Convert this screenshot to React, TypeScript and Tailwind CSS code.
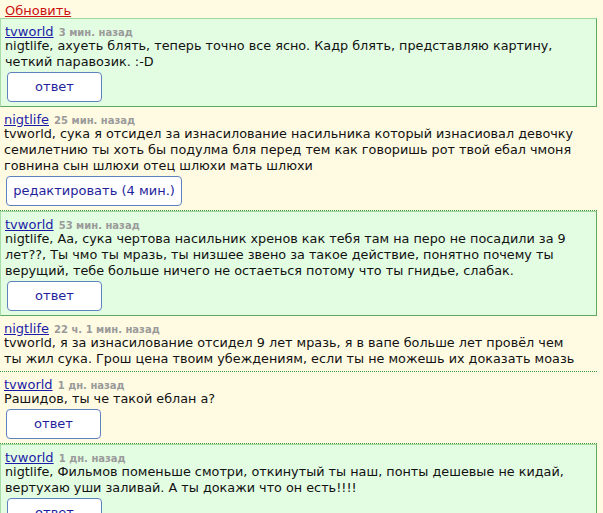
import React from 'react';

interface Post {
  id: number;
  user: string;
  ago: string;
  lines: string[];
  mine: boolean; // green box = reply to me
  action: string;
  wide?: boolean;
}

const posts: Post[] = [
  {
    id: 1,
    user: 'tvworld',
    ago: '3 мин. назад',
    lines: [
      'nigtlife, ахуеть блять, теперь точно все ясно. Кадр блять, представляю картину,',
      'четкий паравозик. :-D',
    ],
    mine: true,
    action: 'ответ',
  },
  {
    id: 2,
    user: 'nigtlife',
    ago: '25 мин. назад',
    lines: [
      'tvworld, сука я отсидел за изнасилование насильника который изнасиовал девочку',
      'семилетнию ты хоть бы подулма бля перед тем как говоришь рот твой ебал чмоня',
      'говнина сын шлюхи отец шлюхи мать шлюхи',
    ],
    mine: false,
    action: 'редактировать (4 мин.)',
    wide: true,
  },
  {
    id: 3,
    user: 'tvworld',
    ago: '53 мин. назад',
    lines: [
      'nigtlife, Аа, сука чертова насильник хренов как тебя там на перо не посадили за 9',
      'лет??, Ты чмо ты мразь, ты низшее звено за такое действие, понятно почему ты',
      'верущий, тебе больше ничего не остаеться потому что ты гнидье, слабак.',
    ],
    mine: true,
    action: 'ответ',
  },
  {
    id: 4,
    user: 'nigtlife',
    ago: '22 ч. 1 мин. назад',
    lines: [
      'tvworld, я за изнасилование отсидел 9 лет мразь, я в вапе больше лет провёл чем',
      'ты жил сука. Грош цена твоим убеждениям, если ты не можешь их доказать моазь',
    ],
    mine: false,
    action: '',
  },
  {
    id: 5,
    user: 'tvworld',
    ago: '1 дн. назад',
    lines: ['Рашидов, ты че такой еблан а?'],
    mine: false,
    action: 'ответ',
  },
  {
    id: 6,
    user: 'tvworld',
    ago: '1 дн. назад',
    lines: [
      'nigtlife, Фильмов поменьше смотри, откинутый ты наш, понты дешевые не кидай,',
      'вертухаю уши заливай. А ты докажи что он есть!!!!',
    ],
    mine: true,
    action: 'ответ',
  },
];

const PostItem: React.FC<{ post: Post }> = ({ post }) => {
  const box = post.mine
    ? 'bg-[#e3fde3] border-l border-l-[#a9dca9] border-r border-r-[#5fa85f] border-b border-b-[#5fa85f] border-t border-t-[#9fd89f]'
    : 'border-b border-dotted border-b-[#3f9a3f]';

  return (
    <div className={`w-[597px] px-[4px] pt-[4px] pb-[4px] ${box}`}>
      <div className="h-[15px] leading-[15px]">
        <a href="#" className="text-[13px] text-[#1c1ca8] underline">
          {post.user}
        </a>{' '}
        <span className="text-[10px] font-bold text-[#9a9a9a]">{post.ago}</span>
      </div>
      <div className="text-[12.8px] leading-[16px] text-[#111] whitespace-nowrap">
        {post.lines.map((l, i) => (
          <div key={i}>{l}</div>
        ))}
      </div>
      {post.action && (
        <button
          className={`mt-[2px] ml-[2px] block h-[30px] whitespace-nowrap ${post.wide ? 'w-[176px]' : 'w-[95px]'} rounded-[4px] border border-[#5f82bd] bg-white text-[13px] text-[#1f1f9c]`}
        >
          {post.action}
        </button>
      )}
    </div>
  );
};

export default function App() {
  return (
    <div
      className="min-h-screen w-[603px] bg-[#fffbe3]"
      style={{ fontFamily: '"DejaVu Sans", Verdana, sans-serif' }}
    >
      <div className="h-[18px] px-[5px] pt-[2px] leading-[16px]">
        <a href="#" className="text-[13px] text-[#cc1111] underline">
          Обновить
        </a>
      </div>
      {posts.map((p) => (
        <PostItem key={p.id} post={p} />
      ))}
    </div>
  );
}
